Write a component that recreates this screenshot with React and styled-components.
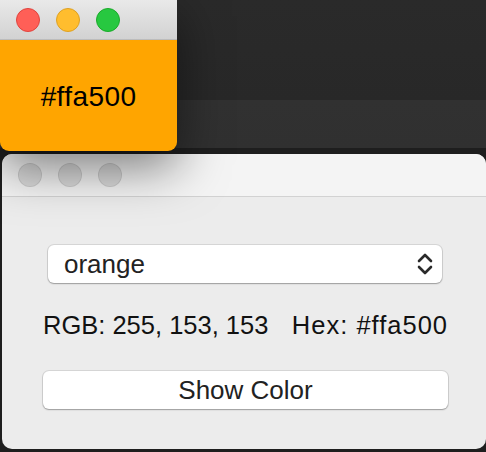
import React from "react";
import styled, {createGlobalStyle} from "styled-components";

const GlobalStyle = createGlobalStyle`
  html, body {
    margin: 0;
    padding: 0;
    background: #1e1e1e;
  }
  body {
    font-family: "Liberation Sans", Arial, sans-serif;
  }
`;

const Desktop = styled.div`
  width: 486px;
  height: 452px;
  overflow: hidden;
  background: linear-gradient(to bottom, #2a2a2a 0, #282828 100px, #313131 100px, #303030 148px, #1e1e1e 148px);
`;

const SmallWindow = styled.div`
  position: relative;
  z-index: 2;
  width: 177px;
  height: 151px;
  display: flex;
  flex-direction: column;
  border-radius: 0 0 9px 9px;
  overflow: hidden;
  box-shadow: 0 16px 50px rgba(0, 0, 0, 0.5);
`;

const TitleBar = styled.div`
  flex: none;
  height: ${p => p.height}px;
  display: flex;
  align-items: center;
  gap: 16px;
  padding-left: ${p => p.inset}px;
  background: ${p => p.bg};
  border-bottom: 1px solid ${p => p.line};
  box-sizing: border-box;
`;

const Light = styled.span`
  width: 24px;
  height: 24px;
  border-radius: 50%;
  box-sizing: border-box;
  background: ${p => p.fill};
  border: 1px solid ${p => p.edge};
`;

const Swatch = styled.div`
  flex: 1;
  display: flex;
  align-items: center;
  justify-content: center;
  background: #ffa500;
  color: #000;
  font-size: 28px;
  letter-spacing: 0.4px;
  padding-top: 2px;
`;

const MainWindow = styled.div`
  position: relative;
  z-index: 1;
  margin: 3px 0 0 2px;
  width: 484px;
  height: 295px;
  display: flex;
  flex-direction: column;
  background: #ececec;
  border-radius: 10px;
  overflow: hidden;
`;

const Content = styled.div`
  display: flex;
  flex-direction: column;
  width: 405px;
  margin-left: 41px;
  padding-top: 48px;
`;

const Select = styled.div`
  height: 38px;
  margin: 0 6px 0 5px;
  display: flex;
  align-items: center;
  justify-content: space-between;
  padding: 0 9px 0 16px;
  box-sizing: border-box;
  background: #fff;
  border-radius: 6px;
  box-shadow: 0 0 0 1px rgba(0, 0, 0, 0.09), 0 1px 1.5px rgba(0, 0, 0, 0.28);
  color: #222;
  font-size: 26px;
`;

const InfoRow = styled.div`
  display: flex;
  justify-content: space-between;
  margin-top: 26px;
  height: 32px;
  line-height: 32px;
  color: #111;
  font-size: 25.5px;
`;

const Label = styled.span`
  letter-spacing: ${p => p.spacing || 0}px;
`;

const Button = styled.div`
  margin-top: 30px;
  height: 38px;
  display: flex;
  align-items: center;
  justify-content: center;
  background: #fff;
  border-radius: 6px;
  box-shadow: 0 0 0 1px rgba(0, 0, 0, 0.09), 0 1px 1.5px rgba(0, 0, 0, 0.28);
  color: #222;
  font-size: 26px;
`;

const Chevrons = () => (
  <svg width="16" height="24" viewBox="0 0 16 24" fill="none" stroke="#2a2a2a"
       strokeWidth="2.6" strokeLinecap="round" strokeLinejoin="round">
    <path d="M2 9 L8 3 L14 9"/>
    <path d="M2 15 L8 21 L14 15"/>
  </svg>
);

const App = () => (
  <Desktop>
    <GlobalStyle/>
    <SmallWindow>
      <TitleBar height={40} inset={16} bg="linear-gradient(#e9e9e9, #d2d2d2)" line="#bcbcbc">
        <Light fill="#ff5f57" edge="#e0443e"/>
        <Light fill="#ffbd2e" edge="#dea123"/>
        <Light fill="#27c840" edge="#1aab29"/>
      </TitleBar>
      <Swatch>#ffa500</Swatch>
    </SmallWindow>
    <MainWindow>
      <TitleBar height={43} inset={16} bg="#f4f4f4" line="#d2d2d2">
        <Light fill="rgba(0,0,0,0.1)" edge="rgba(0,0,0,0.07)"/>
        <Light fill="rgba(0,0,0,0.1)" edge="rgba(0,0,0,0.07)"/>
        <Light fill="rgba(0,0,0,0.1)" edge="rgba(0,0,0,0.07)"/>
      </TitleBar>
      <Content>
        <Select>
          <span>orange</span>
          <Chevrons/>
        </Select>
        <InfoRow>
          <Label>RGB: 255, 153, 153</Label>
          <Label spacing={1}>Hex: #ffa500</Label>
        </InfoRow>
        <Button>Show Color</Button>
      </Content>
    </MainWindow>
  </Desktop>
);

export default App;
